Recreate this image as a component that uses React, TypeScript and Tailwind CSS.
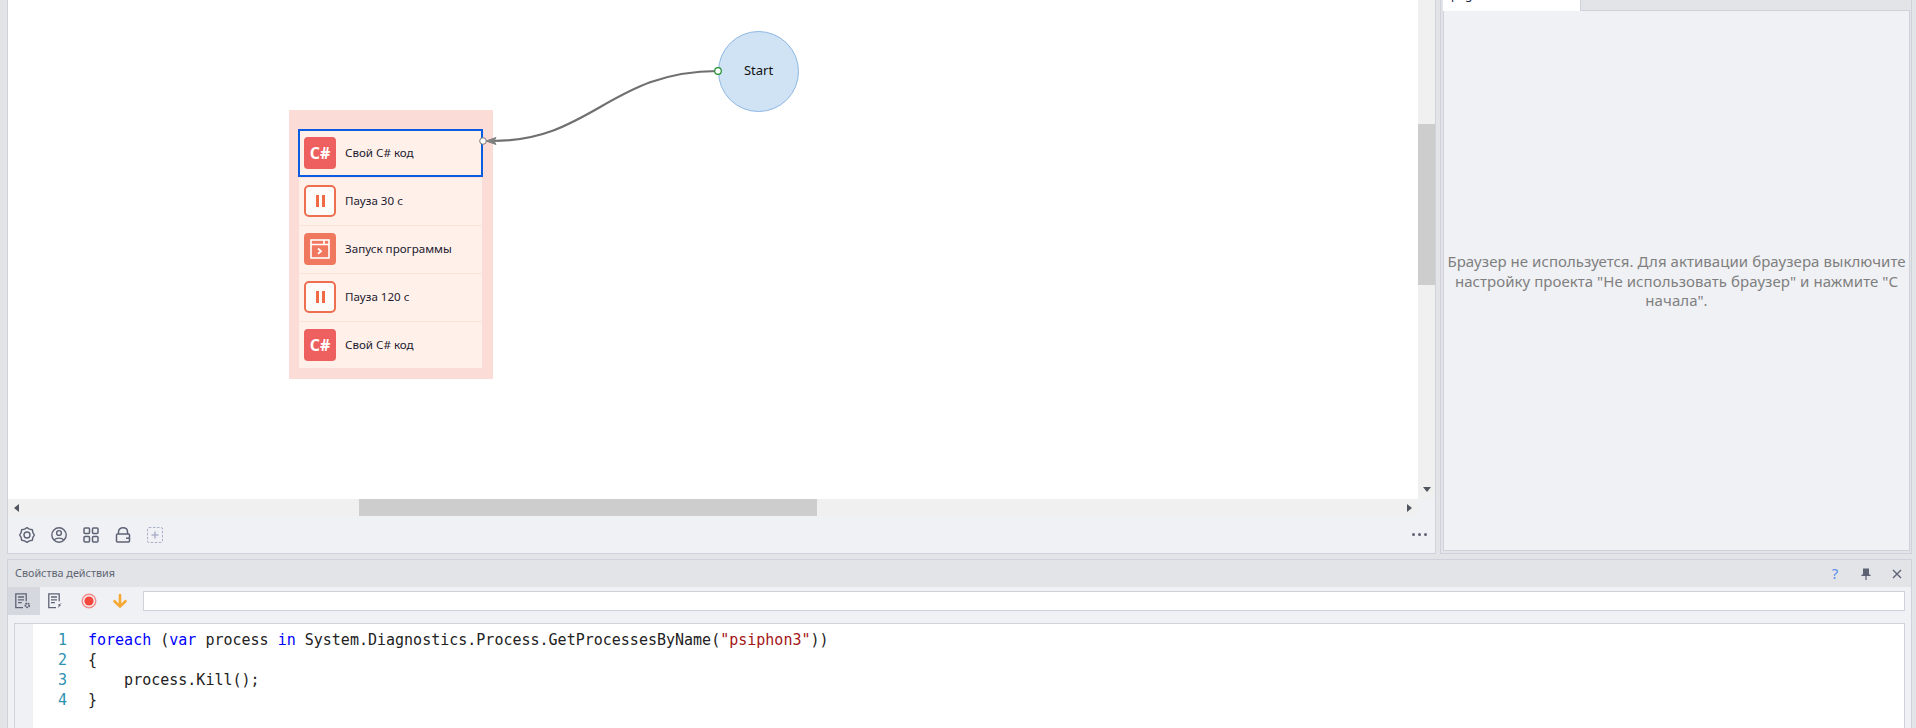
import React from 'react'

const uiFont = 'font-["Noto_Sans","Open_Sans",sans-serif]'

function GearIcon() {
    return (
        <svg width="16" height="16" viewBox="0 0 16 16" fill="none" stroke="#5d6375" strokeWidth="1.4" strokeLinejoin="round">
            <polygon points="15.4,8 13.9,10.4 13.3,13.3 10.400,13.900 8,15.400 5.600,13.900 2.700,13.300 2.100,10.400 0.600,8 2.100,5.600 2.700,2.700 5.600,2.100 8,0.600 10.400,2.100 13.300,2.700 13.900,5.600" />
            <circle cx="8" cy="8" r="3" />
        </svg>
    )
}

function UserIcon() {
    return (
        <svg width="16" height="16" viewBox="0 0 16 16" fill="none" stroke="#5d6375" strokeWidth="1.4">
            <circle cx="8" cy="8" r="7.2" />
            <circle cx="8" cy="6" r="2.4" />
            <path d="M3.4 13.2C4.2 10.4 11.8 10.4 12.6 13.2" />
        </svg>
    )
}

function GridIcon() {
    return (
        <svg width="16" height="16" viewBox="0 0 16 16" fill="none" stroke="#5d6375" strokeWidth="1.5">
            <rect x="1" y="1" width="5.5" height="5.5" rx="1" />
            <rect x="9.5" y="1" width="5.5" height="5.5" rx="1" />
            <rect x="1" y="9.5" width="5.5" height="5.5" rx="1" />
            <rect x="9.5" y="9.5" width="5.5" height="5.5" rx="1" />
        </svg>
    )
}

function LockIcon() {
    return (
        <svg width="16" height="16" viewBox="0 0 16 16" fill="none" stroke="#5d6375" strokeWidth="1.5">
            <path d="M3.500 7V4.800C3.500 2.200 5.600 0.800 8 0.800s4.500 1.400 4.500 4V7" />
            <rect x="1.500" y="7" width="13" height="8" rx="1" />
            <path d="M11 11.200h3.500" />
        </svg>
    )
}

function AddIcon() {
    return (
        <svg width="16" height="16" viewBox="0 0 16 16" fill="none" stroke="#aab2c8" strokeWidth="1">
            <rect x="0.5" y="0.5" width="15" height="15" rx="1.5" strokeDasharray="2.5 1.5" />
            <path d="M8 4.5v7M4.5 8h7" strokeWidth="1.5" />
        </svg>
    )
}

function DocGearIcon() {
    return (
        <svg width="16" height="16" viewBox="0 0 16 16" fill="none" stroke="#5d6375" strokeWidth="1.3">
            <path d="M8 14.600H0.800V0.800h10.400v7.400" />
            <path d="M3 4h6M3 6.800h6M3 9.600h3.800" />
            <circle cx="12.300" cy="12.300" r="2" strokeWidth="1.7" strokeDasharray="1.6 0.6" />
        </svg>
    )
}

function DocBoltIcon() {
    return (
        <svg width="16" height="16" viewBox="0 0 16 16" fill="none" stroke="#5d6375" strokeWidth="1.3">
            <path d="M8 14.600H0.800V0.800h10.400v7.400" />
            <path d="M3 4h6M3 6.800h6M3 9.600h3.800" />
            <path d="M15 9.400l-3 1.800 1 .8-3.200 3 1-2.600-.9-.7z" fill="#5d6375" stroke="none" />
        </svg>
    )
}

function RecordIcon() {
    return (
        <svg width="16" height="16" viewBox="0 0 16 16" fill="none">
            <circle cx="8" cy="8" r="6.8" stroke="#f58a8a" strokeWidth="1.4" />
            <circle cx="8" cy="8" r="4.6" fill="#f4483f" />
        </svg>
    )
}

function ArrowIcon() {
    return (
        <svg width="16" height="16" viewBox="0 0 16 16" fill="none" stroke="#f5a833" strokeWidth="2.6" strokeLinecap="round" strokeLinejoin="round">
            <path d="M8 2v11M2.5 8.2L8 13.5l5.5-5.3" />
        </svg>
    )
}

function Tri({ dir }: { dir: 'left' | 'right' | 'down' }) {
    const pts = dir === 'left' ? '6,1 6,9 1,5' : dir === 'right' ? '1,1 1,9 6,5' : '1,2 9,2 5,7'
    return (
        <svg width={dir === 'down' ? 10 : 7} height="10" viewBox={dir === 'down' ? '0 0 10 10' : '0 0 7 10'}>
            <polygon points={pts} fill="#50545c" />
        </svg>
    )
}

function CSharpBadge() {
    return (
        <div className="w-8 h-8 rounded-[4px] bg-[#ee5f5f] flex items-center justify-center text-white text-[16px] font-bold font-['Open_Sans',sans-serif]">
            C#
        </div>
    )
}

function PauseBadge() {
    return (
        <div className="w-8 h-8 rounded-[5px] border-2 border-[#ee6f4f] bg-[#fdfbfa] flex items-center justify-center gap-[3px]">
            <div className="w-[3px] h-3 bg-[#ee6b45]" />
            <div className="w-[3px] h-3 bg-[#ee6b45]" />
        </div>
    )
}

function ProgramBadge() {
    return (
        <div className="w-8 h-8 rounded-[4px] bg-[#f0785f] flex items-center justify-center">
            <svg width="20" height="20" viewBox="0 0 20 20" fill="none" stroke="#fff" strokeWidth="1.6">
                <rect x="1" y="1" width="18" height="18" />
                <path d="M1 5.5h18M14 1v4.5" />
                <path d="M8 9.5l3 2.7-3 2.7" strokeWidth="1.8" />
            </svg>
        </div>
    )
}

function ActionRow({ icon, label, pos }: { icon: React.ReactNode; label: string; pos: 'first' | 'middle' | 'last' }) {
    const rowClass =
        pos === 'first'
            ? 'h-12 flex items-center pl-[5px] gap-[9px]'
            : pos === 'middle'
              ? 'h-12 pb-px flex items-center pl-[5px] gap-[9px] border-t border-[#fbe3da]'
              : 'h-[47px] flex items-center pl-[5px] gap-[9px] border-t border-[#fbe3da]'
    return (
        <div className={rowClass}>
            {icon}
            <span className="text-[11.6px] text-[#1c1a2e]">{label}</span>
        </div>
    )
}

function Canvas() {
    return (
        <div className="relative flex-1 bg-white overflow-hidden">
            {/* Start node */}
            <div className="absolute left-[710px] top-[31px] w-[81px] h-[81px] rounded-full bg-[#d0e3f5] border border-[#8db7e2] flex items-center justify-center text-[13px] text-[#111] pb-[1px]">
                Start
            </div>

            {/* Action group */}
            <div className="absolute left-[281px] top-[110px] w-[204px] bg-[#fbdcd7] pt-[19px] pb-[11px] pl-[10px] pr-[11px]">
                <div className="bg-[#fff0ea]">
                    <div className="relative">
                        <ActionRow icon={<CSharpBadge />} label="Свой C# код" pos="first" />
                        <div className="absolute -left-px -right-px top-0 bottom-0 border-2 border-[#0a5ce0]" />
                    </div>
                    <ActionRow icon={<PauseBadge />} label="Пауза 30 с" pos="middle" />
                    <ActionRow icon={<ProgramBadge />} label="Запуск программы" pos="middle" />
                    <ActionRow icon={<PauseBadge />} label="Пауза 120 с" pos="middle" />
                    <ActionRow icon={<CSharpBadge />} label="Свой C# код" pos="last" />
                </div>
            </div>

            {/* Connection */}
            <svg className="absolute inset-0 pointer-events-none" width="1410" height="499" viewBox="8 0 1410 499" fill="none">
                <path d="M718 71C610 71 592 141 492 141" stroke="#707070" strokeWidth="2.2" />
                <polygon points="486,141 496,137.5 494,141 496,144.5" fill="#808080" stroke="#808080" strokeWidth="1" />
                <circle cx="718" cy="71" r="3.3" fill="#fff" stroke="#1f8f2f" strokeWidth="1.2" />
                <circle cx="483" cy="141" r="3.3" fill="#fff" stroke="#777" strokeWidth="1" />
            </svg>
        </div>
    )
}

function VerticalScrollbar() {
    return (
        <div className="w-[17px] bg-[#f0f0f0] flex flex-col">
            <div className="h-[124px]" />
            <div className="h-[161px] bg-[#cdcdcd]" />
            <div className="flex-1" />
            <div className="h-[19px] flex items-center justify-center">
                <Tri dir="down" />
            </div>
        </div>
    )
}

function HorizontalScrollbar() {
    return (
        <div className="h-[17px] flex">
            <div className="w-[1410px] bg-[#f0f0f0] flex items-center">
                <div className="w-[351px] pl-[5px] flex items-center">
                    <Tri dir="left" />
                </div>
                <div className="w-[458px] h-[17px] bg-[#cdcdcd]" />
                <div className="flex-1 flex justify-end pr-[5px]">
                    <Tri dir="right" />
                </div>
            </div>
        </div>
    )
}

function LeftPanel() {
    return (
        <div className="w-[1429px] border-x border-b border-[#cfd2da] bg-[#f0f1f5] flex flex-col">
            <div className="h-[499px] flex">
                <Canvas />
                <VerticalScrollbar />
            </div>
            <HorizontalScrollbar />
            <div className="flex-1 flex items-center pl-[11px] pr-[8px] gap-4">
                <GearIcon />
                <UserIcon />
                <GridIcon />
                <LockIcon />
                <AddIcon />
                <div className="ml-auto flex gap-[3px]">
                    <div className="w-[3px] h-[3px] rounded-full bg-[#5d6375]" />
                    <div className="w-[3px] h-[3px] rounded-full bg-[#5d6375]" />
                    <div className="w-[3px] h-[3px] rounded-full bg-[#5d6375]" />
                </div>
            </div>
        </div>
    )
}

function BrowserPanel() {
    return (
        <div className="w-[472px] border-x border-b border-[#cfd2da] pl-[2px] pr-[1px] pb-[2px] flex flex-col">
            <div className="h-[11px] flex">
                <div className="w-[137px] bg-white overflow-hidden pl-[8px]">
                    <div className="-mt-[14px] text-[12px] leading-[18px] text-[#1c2340]">page</div>
                </div>
                <div className="flex-1 border-l border-b border-[#cfd2da]" />
            </div>
            <div className="flex-1 bg-[#f0f1f5] border-x border-b border-[#cfd2da] flex items-center justify-center pt-[2px]">
                <p className="text-center text-[15px] tracking-[0.05px] leading-[19.5px] text-[#7f7f7f]">
                    Браузер не используется. Для активации браузера выключите настройку проекта "Не использовать браузер" и нажмите "С начала".
                </p>
            </div>
        </div>
    )
}

function PropertiesPanel() {
    return (
        <div className="mt-[5px] ml-[7px] w-[1905px] flex-1 border-x border-t border-[#cfd2da] bg-[#f0f1f5] flex flex-col">
            <div className="h-[27px] bg-[#e2e4e8] flex items-center pl-[7px] text-[10.8px] text-[#5f6472]">
                <span>Свойства действия</span>
                <div className="ml-auto flex items-center">
                    <span className="w-4 text-center text-[15px] text-[#5b8def]">?</span>
                    <svg className="ml-[18px]" width="10" height="12" viewBox="0 0 10 12" fill="#5d6375">
                        <path d="M2 0.5h6v6h1.5v1.5H5.6V12H4.4V8H0.5V6.500H2z" />
                    </svg>
                    <svg className="ml-[20px] mr-[8px]" width="12" height="12" viewBox="0 0 12 12" fill="none" stroke="#5d6375" strokeWidth="1.4">
                        <path d="M2 2l8 8M10 2l-8 8" />
                    </svg>
                </div>
            </div>
            <div className="h-[28px] flex items-center">
                <div className="w-8 h-full bg-[#d5d8de] flex items-center justify-center pr-[2px]">
                    <DocGearIcon />
                </div>
                <div className="w-8 h-full flex items-center justify-center">
                    <DocBoltIcon />
                </div>
                <div className="w-8 h-full flex items-center justify-center ml-px">
                    <RecordIcon />
                </div>
                <div className="w-8 h-full flex items-center justify-center -ml-px">
                    <ArrowIcon />
                </div>
                <div className="ml-[7px] w-[1762px] h-5 bg-white border border-[#cfd2da]" />
            </div>
            <div className="mt-2 ml-[6px] w-[1891px] flex-1 bg-white border-l border-t border-r border-[#cfd2da] flex font-['DejaVu_Sans_Mono',monospace] text-[15px] leading-[20px] text-[#222] pt-[6px]">
                <div className="-mt-[6px] w-[18px] bg-[#f0f1f5]" />
                <div className="w-[34px] text-right text-[#2b91af]">
                    <div>1</div>
                    <div>2</div>
                    <div>3</div>
                    <div>4</div>
                </div>
                <div className="pl-[21px] whitespace-pre">
                    <div>
                        <span className="text-[#0000ff]">foreach</span> (<span className="text-[#0000ff]">var</span> process <span className="text-[#0000ff]">in</span> System.Diagnostics.Process.GetProcessesByName(<span className="text-[#a31515]">"psiphon3"</span>))
                    </div>
                    <div>{'{'}</div>
                    <div>{'    process.Kill();'}</div>
                    <div>{'}'}</div>
                </div>
            </div>
        </div>
    )
}

export default function App() {
    return (
        <div className={`w-[1916px] h-[728px] overflow-hidden bg-[#e2e4e8] flex flex-col ${uiFont}`}>
            <div className="h-[554px] flex pl-[7px] gap-1">
                <LeftPanel />
                <BrowserPanel />
            </div>
            <PropertiesPanel />
        </div>
    )
}
